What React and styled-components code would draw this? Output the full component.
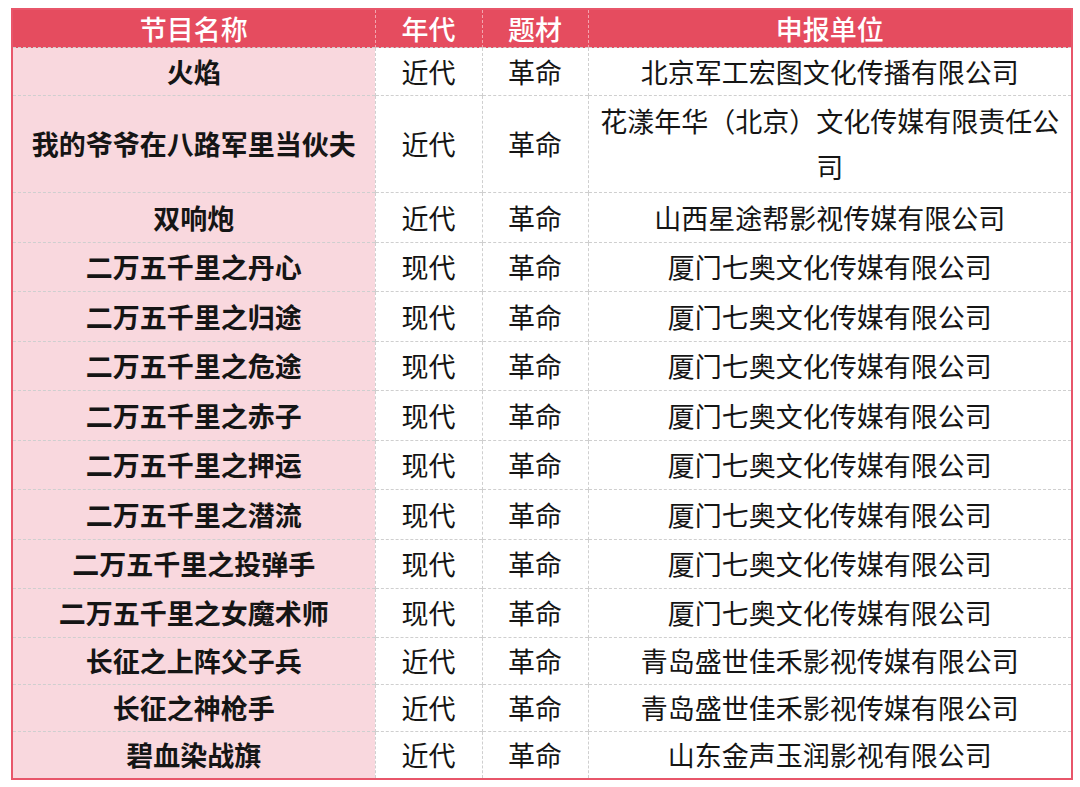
import styled, { createGlobalStyle } from "styled-components";

const GlobalStyle = createGlobalStyle`
    body {
        margin: 0;
        background: #fff;
        font-family: "Noto Sans CJK SC", "Noto Sans", sans-serif;
    }
`;

const ROWS = [
    { name: "火焰", era: "近代", theme: "革命", unit: "北京军工宏图文化传播有限公司", h: 48 },
    { name: "我的爷爷在八路军里当伙夫", era: "近代", theme: "革命", unit: "花漾年华（北京）文化传媒有限责任公司", h: 97 },
    { name: "双响炮", era: "近代", theme: "革命", unit: "山西星途帮影视传媒有限公司", h: 50 },
    { name: "二万五千里之丹心", era: "现代", theme: "革命", unit: "厦门七奥文化传媒有限公司", h: 49 },
    { name: "二万五千里之归途", era: "现代", theme: "革命", unit: "厦门七奥文化传媒有限公司", h: 50 },
    { name: "二万五千里之危途", era: "现代", theme: "革命", unit: "厦门七奥文化传媒有限公司", h: 49 },
    { name: "二万五千里之赤子", era: "现代", theme: "革命", unit: "厦门七奥文化传媒有限公司", h: 50 },
    { name: "二万五千里之押运", era: "现代", theme: "革命", unit: "厦门七奥文化传媒有限公司", h: 49 },
    { name: "二万五千里之潜流", era: "现代", theme: "革命", unit: "厦门七奥文化传媒有限公司", h: 50 },
    { name: "二万五千里之投弹手", era: "现代", theme: "革命", unit: "厦门七奥文化传媒有限公司", h: 49 },
    { name: "二万五千里之女魔术师", era: "现代", theme: "革命", unit: "厦门七奥文化传媒有限公司", h: 49 },
    { name: "长征之上阵父子兵", era: "近代", theme: "革命", unit: "青岛盛世佳禾影视传媒有限公司", h: 47 },
    { name: "长征之神枪手", era: "近代", theme: "革命", unit: "青岛盛世佳禾影视传媒有限公司", h: 47 },
    { name: "碧血染战旗", era: "近代", theme: "革命", unit: "山东金声玉润影视有限公司", h: 47 },
];

const Page = styled.div`
    padding: 8px 7px 0 11px;
`;

const Table = styled.table`
    width: 1062px;
    table-layout: fixed;
    border-collapse: collapse;
    border: 2px solid #e8566a;
    font-size: 27px;
    color: #151515;
`;

const HeadCell = styled.th`
    height: 37px;
    padding: 0;
    background: #e54c5f;
    color: #fff;
    font-weight: 500;
    line-height: 37px;
    text-align: center;
    border-left: 1px dashed #f2a5ae;
    &:first-child { border-left: none; }
`;

const Cell = styled.td`
    padding: 0 8px;
    text-align: center;
    vertical-align: middle;
    line-height: 46px;
    border-top: 1px dashed #cfcfcf;
    border-left: 1px dashed #cfcfcf;
    background: ${({ $name }) => ($name ? "#f9d8de" : "#fff")};
    font-weight: ${({ $name }) => ($name ? 700 : 400)};
    &:first-child { border-left: none; }
`;

export default function App() {
    return (
        <Page>
            <GlobalStyle />
            <Table>
                <colgroup>
                    <col style={{ width: 363 }} />
                    <col style={{ width: 107 }} />
                    <col style={{ width: 106 }} />
                    <col />
                </colgroup>
                <thead>
                    <tr>
                        <HeadCell>节目名称</HeadCell>
                        <HeadCell>年代</HeadCell>
                        <HeadCell>题材</HeadCell>
                        <HeadCell>申报单位</HeadCell>
                    </tr>
                </thead>
                <tbody>
                    {ROWS.map((row) => (
                        <tr key={row.name} style={{ height: row.h }}>
                            <Cell $name>{row.name}</Cell>
                            <Cell>{row.era}</Cell>
                            <Cell>{row.theme}</Cell>
                            <Cell>{row.unit}</Cell>
                        </tr>
                    ))}
                </tbody>
            </Table>
        </Page>
    );
}
